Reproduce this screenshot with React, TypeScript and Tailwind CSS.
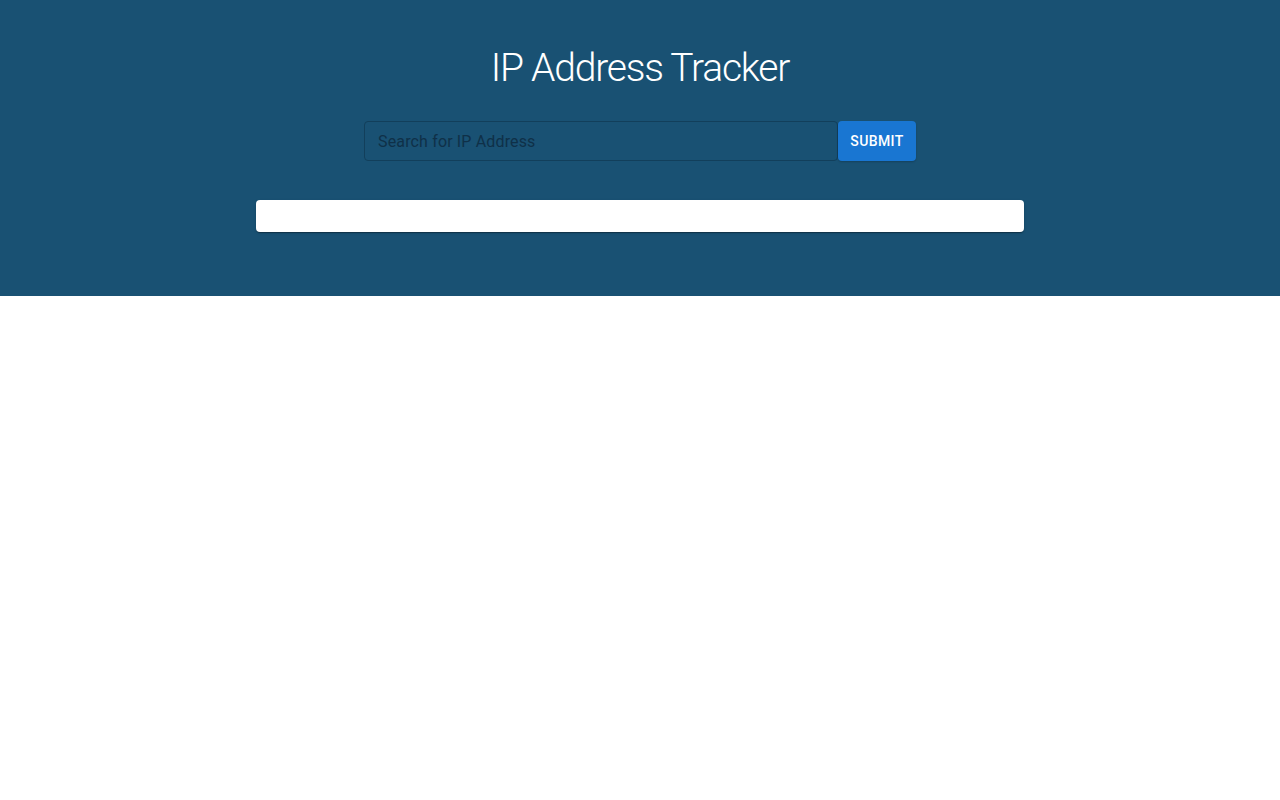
export default function App() {
  return (
    <div className="min-h-[800px] bg-white" style={{ fontFamily: "Roboto, 'Liberation Sans', sans-serif" }}>
      <header className="h-[296px] bg-[#195173] flex flex-col items-center pt-[44px]">
        <h1 className="text-[39px] leading-[48px] font-light tracking-[-1.2px] text-white">IP Address Tracker</h1>
        <div className="mt-[29px] flex items-stretch">
          <input
            placeholder="Search for IP Address"
            className="w-[474px] h-[40px] rounded-[4px] border border-[#123f5b] bg-[#195173] px-[13px] text-[16px] tracking-[0.15px] text-[#0f2f45] placeholder:text-[#0f3048] outline-none"
          />
          <button className="h-[40px] w-[78px] rounded-[4px] bg-[#1976d2] text-[14px] font-medium tracking-[0.4px] text-white shadow-[0_1px_2px_rgba(0,0,0,0.2)]">
            SUBMIT
          </button>
        </div>
        <div className="mt-[39px] h-[32px] w-[768px] rounded-[4px] bg-white shadow-[0_2px_1px_-1px_rgba(0,0,0,0.2),0_1px_1px_0_rgba(0,0,0,0.14),0_1px_3px_0_rgba(0,0,0,0.12)]"></div>
      </header>
    </div>
  );
}
